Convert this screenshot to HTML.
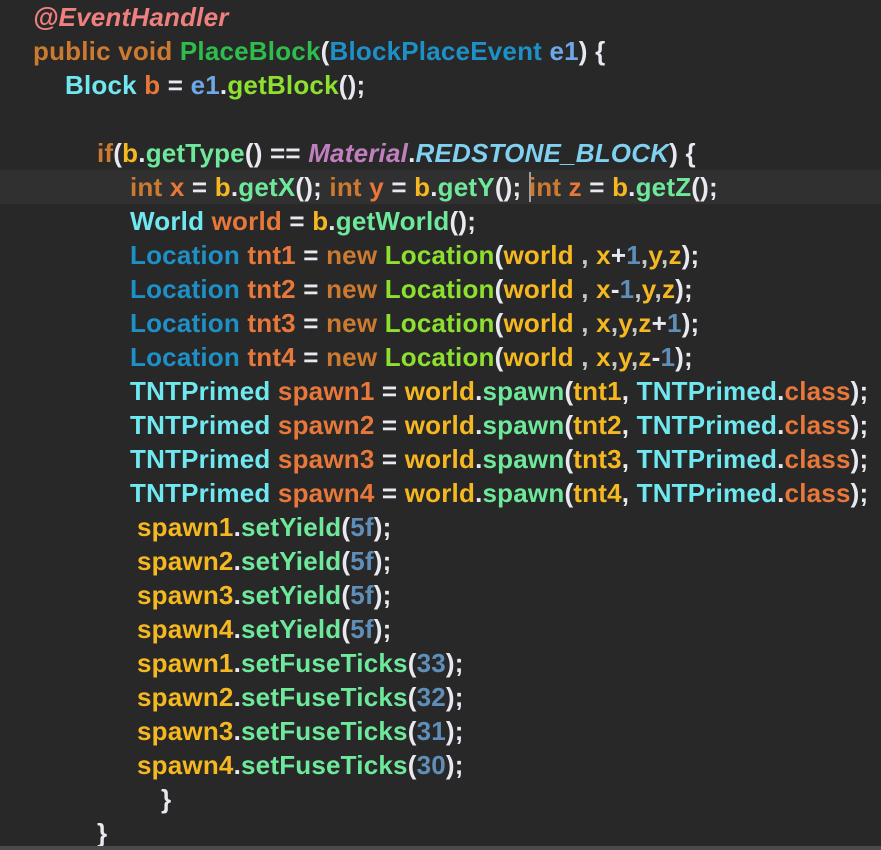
<!DOCTYPE html>
<html><head><meta charset="utf-8"><style>
html,body{margin:0;padding:0;background:#282828;width:881px;height:850px;overflow:hidden;position:relative}
.l{position:absolute;left:0;right:0;height:34px;line-height:34px;margin-top:2px;white-space:pre;font:bold 26px "Liberation Sans",sans-serif;letter-spacing:0.2px;color:#e8e8f0}
.cur{position:absolute;left:0;right:0;top:170px;height:34px;background:#303030}
.caret{display:inline-block;width:2px;height:30px;background:#a0a0a0;vertical-align:middle;margin-right:-2px;margin-top:-4px}
.bot{position:absolute;left:0;right:0;top:846px;height:4px;background:#4a4a4a}
.an{color:#f08080;font-style:italic}
.kw{color:#cc7a30}
.md{color:#2ebd4c}
.ty{color:#1e90c8}
.pa{color:#6fa8e8}
.cl{color:#70e8f0}
.v{color:#e8783a}
.gb{color:#8ee030}
.u{color:#f5b820}
.m{color:#6ee89a}
.mat{color:#c080c0;font-style:italic}
.st{color:#80d0f0;font-style:italic}
.n{color:#5f8fb8}
.c{color:#c8c8c8}
</style></head><body>
<div class="cur"></div>
<div class="l" style="top:0;padding-left:33px"><span class="an">@EventHandler</span></div>
<div class="l" style="top:34px;padding-left:33px"><span class="kw">public void </span><span class="md">PlaceBlock</span>(<span class="ty">BlockPlaceEvent</span> <span class="pa">e1</span>) {</div>
<div class="l" style="top:68px;padding-left:65px"><span class="cl">Block</span> <span class="v">b</span> = <span class="pa">e1</span>.<span class="gb">getBlock</span>();</div>
<div class="l" style="top:136px;padding-left:97px"><span class="kw">if</span>(<span class="u">b</span>.<span class="m">getType</span>() == <span class="mat">Material</span>.<span class="st">REDSTONE_BLOCK</span>) {</div>
<div class="l" style="top:170px;padding-left:130px"><span class="kw">int</span> <span class="v">x</span> = <span class="u">b</span>.<span class="m">getX</span>(); <span class="kw">int</span> <span class="v">y</span> = <span class="u">b</span>.<span class="m">getY</span>(); <span class="caret"></span><span class="kw">int</span> <span class="v">z</span> = <span class="u">b</span>.<span class="m">getZ</span>();</div>
<div class="l" style="top:204px;padding-left:130px"><span class="cl">World</span> <span class="v">world</span> = <span class="u">b</span>.<span class="m">getWorld</span>();</div>
<div class="l" style="top:238px;padding-left:130px"><span class="ty">Location</span> <span class="v">tnt1</span> = <span class="kw">new</span> <span class="gb">Location</span>(<span class="u">world</span> <span class="c">,</span> <span class="u">x</span>+<span class="n">1</span><span class="c">,</span><span class="u">y</span><span class="c">,</span><span class="u">z</span>);</div>
<div class="l" style="top:272px;padding-left:130px"><span class="ty">Location</span> <span class="v">tnt2</span> = <span class="kw">new</span> <span class="gb">Location</span>(<span class="u">world</span> <span class="c">,</span> <span class="u">x</span>-<span class="n">1</span><span class="c">,</span><span class="u">y</span><span class="c">,</span><span class="u">z</span>);</div>
<div class="l" style="top:306px;padding-left:130px"><span class="ty">Location</span> <span class="v">tnt3</span> = <span class="kw">new</span> <span class="gb">Location</span>(<span class="u">world</span> <span class="c">,</span> <span class="u">x</span><span class="c">,</span><span class="u">y</span><span class="c">,</span><span class="u">z</span>+<span class="n">1</span>);</div>
<div class="l" style="top:340px;padding-left:130px"><span class="ty">Location</span> <span class="v">tnt4</span> = <span class="kw">new</span> <span class="gb">Location</span>(<span class="u">world</span> <span class="c">,</span> <span class="u">x</span><span class="c">,</span><span class="u">y</span><span class="c">,</span><span class="u">z</span>-<span class="n">1</span>);</div>
<div class="l" style="top:374px;padding-left:130px"><span class="cl">TNTPrimed</span> <span class="v">spawn1</span> = <span class="u">world</span>.<span class="m">spawn</span>(<span class="u">tnt1</span>, <span class="cl">TNTPrimed</span>.<span class="v">class</span>);</div>
<div class="l" style="top:408px;padding-left:130px"><span class="cl">TNTPrimed</span> <span class="v">spawn2</span> = <span class="u">world</span>.<span class="m">spawn</span>(<span class="u">tnt2</span>, <span class="cl">TNTPrimed</span>.<span class="v">class</span>);</div>
<div class="l" style="top:442px;padding-left:130px"><span class="cl">TNTPrimed</span> <span class="v">spawn3</span> = <span class="u">world</span>.<span class="m">spawn</span>(<span class="u">tnt3</span>, <span class="cl">TNTPrimed</span>.<span class="v">class</span>);</div>
<div class="l" style="top:476px;padding-left:130px"><span class="cl">TNTPrimed</span> <span class="v">spawn4</span> = <span class="u">world</span>.<span class="m">spawn</span>(<span class="u">tnt4</span>, <span class="cl">TNTPrimed</span>.<span class="v">class</span>);</div>
<div class="l" style="top:510px;padding-left:137px"><span class="u">spawn1</span>.<span class="m">setYield</span>(<span class="n">5f</span>);</div>
<div class="l" style="top:544px;padding-left:137px"><span class="u">spawn2</span>.<span class="m">setYield</span>(<span class="n">5f</span>);</div>
<div class="l" style="top:578px;padding-left:137px"><span class="u">spawn3</span>.<span class="m">setYield</span>(<span class="n">5f</span>);</div>
<div class="l" style="top:612px;padding-left:137px"><span class="u">spawn4</span>.<span class="m">setYield</span>(<span class="n">5f</span>);</div>
<div class="l" style="top:646px;padding-left:137px"><span class="u">spawn1</span>.<span class="m">setFuseTicks</span>(<span class="n">33</span>);</div>
<div class="l" style="top:680px;padding-left:137px"><span class="u">spawn2</span>.<span class="m">setFuseTicks</span>(<span class="n">32</span>);</div>
<div class="l" style="top:714px;padding-left:137px"><span class="u">spawn3</span>.<span class="m">setFuseTicks</span>(<span class="n">31</span>);</div>
<div class="l" style="top:748px;padding-left:137px"><span class="u">spawn4</span>.<span class="m">setFuseTicks</span>(<span class="n">30</span>);</div>
<div class="l" style="top:782px;padding-left:161px">}</div>
<div class="l" style="top:816px;padding-left:97px">}</div>
<div class="bot"></div>
</body></html>
